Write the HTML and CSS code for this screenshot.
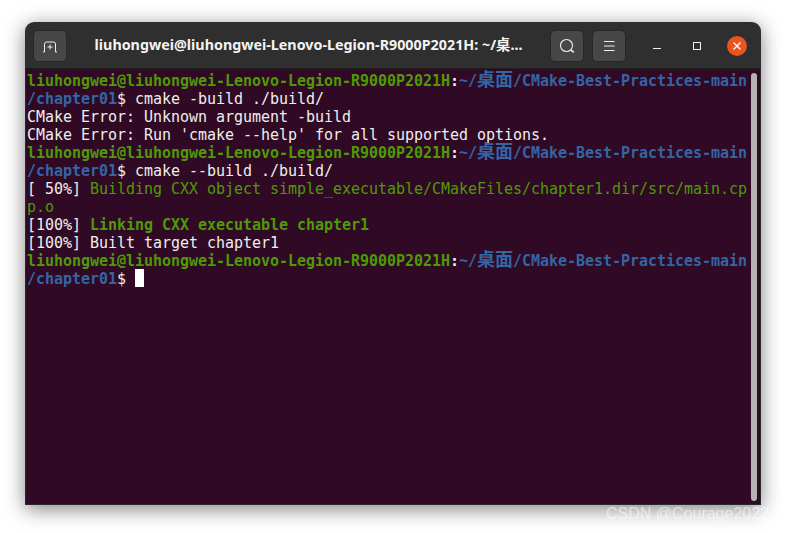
FILE: index.html
```html
<!DOCTYPE html>
<html lang="zh">
<head>
<meta charset="utf-8">
<title>Terminal</title>
<link rel="stylesheet" href="styles.css">
</head>
<body>
<div class="window">
  <header class="titlebar">
    <button class="tb-btn newtab" aria-label="New tab">
      <svg width="16" height="16" viewBox="0 0 16 16" fill="none" stroke="#eeeeec" stroke-width="1"><path d="M1 14h1.500V6a2 2 0 0 1 2-2h7a2 2 0 0 1 2 2v8H15"/><path d="M8 6.500v5M5.500 9h5"/></svg>
    </button>
    <div class="title">liuhongwei@liuhongwei-Lenovo-Legion-R9000P2021H: ~/桌...</div>
    <button class="tb-btn" aria-label="Search">
      <svg width="16" height="16" viewBox="0 0 16 16" fill="none" stroke="#eeeeec" stroke-width="1.100"><circle cx="7.500" cy="7.500" r="6"/><path d="M11.800 11.800l3 2.600" stroke-width="1.600"/></svg>
    </button>
    <button class="tb-btn" aria-label="Menu">
      <svg width="16" height="16" viewBox="0 0 16 16" fill="none" stroke="#eeeeec" stroke-width="1"><path d="M3 3.500h10.500M3 8h10.500M3 12.500h10.500"/></svg>
    </button>
    <div class="winctl">
      <svg width="16" height="16" viewBox="0 0 16 16" fill="none" stroke="#eeeeec" stroke-width="1"><path d="M4 10.500h8"/></svg>
      <svg width="16" height="16" viewBox="0 0 16 16" fill="none" stroke="#eeeeec" stroke-width="1"><rect x="4.500" y="4.500" width="7" height="7"/></svg>
      <span class="ctl-close"><svg width="20" height="20" viewBox="0 0 20 20" fill="none" stroke="#fff" stroke-width="1.400"><path d="M6.500 6.500l7 7M13.500 6.500l-7 7"/></svg></span>
    </div>
  </header>
  <main class="term">
    <pre class="output"><b class="g">liuhongwei@liuhongwei-Lenovo-Legion-R9000P2021H</b><b>:</b><b class="b">~/<span class="cjk">桌面</span>/CMake-Best-Practices-main
/chapter01</b>$ cmake -build ./build/
CMake Error: Unknown argument -build
CMake Error: Run 'cmake --help' for all supported options.
<b class="g">liuhongwei@liuhongwei-Lenovo-Legion-R9000P2021H</b><b>:</b><b class="b">~/<span class="cjk">桌面</span>/CMake-Best-Practices-main
/chapter01</b>$ cmake --build ./build/
[ 50%] <span class="g">Building CXX object simple_executable/CMakeFiles/chapter1.dir/src/main.cp
p.o</span>
[100%] <b class="g">Linking CXX executable chapter1</b>
[100%] Built target chapter1
<b class="g">liuhongwei@liuhongwei-Lenovo-Legion-R9000P2021H</b><b>:</b><b class="b">~/<span class="cjk">桌面</span>/CMake-Best-Practices-main
/chapter01</b>$ <span class="cursor"> </span></pre>
    <div class="scrollbar"></div>
  </main>
</div>
<div class="watermark">CSDN @Courage2022</div>
</body>
</html>
```
FILE: styles.css
```css
html, body { margin: 0; height: 100%; background: #fff; overflow: hidden; }
body { padding: 22px 25px 28px; box-sizing: border-box; width: 786px; height: 533px; position: relative; }
.window {
  height: 483px; display: flex; flex-direction: column; border-radius: 9px 9px 0 0; overflow: hidden;
  box-shadow: 0 4px 20px rgba(0,0,0,.5);
  font-family: "DejaVu Sans Mono", monospace;
}
.titlebar {
  height: 44px; background: #2f2f2f; border-bottom: 1px solid #1f1f1f; display: flex; align-items: center;
  padding: 2px 14px 0 8px; flex: none; box-sizing: content-box;
}
.tb-btn {
  width: 34px; height: 32px; padding: 0; border: 1px solid #272727; border-radius: 5px; background: #474747;
  display: flex; align-items: center; justify-content: center; margin-right: 8px; flex: none; box-sizing: border-box;
}
.newtab { margin-right: 0; }
.title {
  flex: 1; min-width: 0; text-align: center; color: #f3f3f1;
  font: 700 14.300px/20px "Noto Sans", "Noto Sans CJK SC", sans-serif;
  white-space: nowrap; padding: 0 10px 2px;
}
.winctl { display: flex; align-items: center; gap: 24px; margin-left: 15px; flex: none; }
.ctl-close { width: 20px; height: 20px; border-radius: 50%; background: #e95420; display: block; margin-left: -2px; }
.ctl-close svg { display: block; }
.term {
  flex: 1; background: #300a24; position: relative; padding: 3px 1px 0;
  border: 1px solid #2a2a2a; border-top: 0;
}
.output {
  margin: 0; color: #eeeeec; font: 400 15px/18px "DejaVu Sans Mono", "Noto Sans CJK SC", monospace; letter-spacing: -.03px;
}
.output b { font-weight: 700; }
.g { color: #4e9a06; }
.b { color: #3465a4; }
.cjk { font-family: "Noto Sans CJK SC", sans-serif; font-size: 18px; line-height: 0; letter-spacing: 0; }
.cursor { display: inline-block; width: 9px; height: 18px; margin-top: -1px; background: #fff; vertical-align: top; }
.scrollbar { position: absolute; right: 3px; top: 4px; bottom: 3px; width: 6px; border-radius: 3px; background: #b5b2b4; }
.watermark {
  position: absolute; left: 606px; top: 504px; color: rgba(255,255,255,.55);
  font: 400 16px/20px "Liberation Sans", sans-serif; white-space: nowrap;
}
```
